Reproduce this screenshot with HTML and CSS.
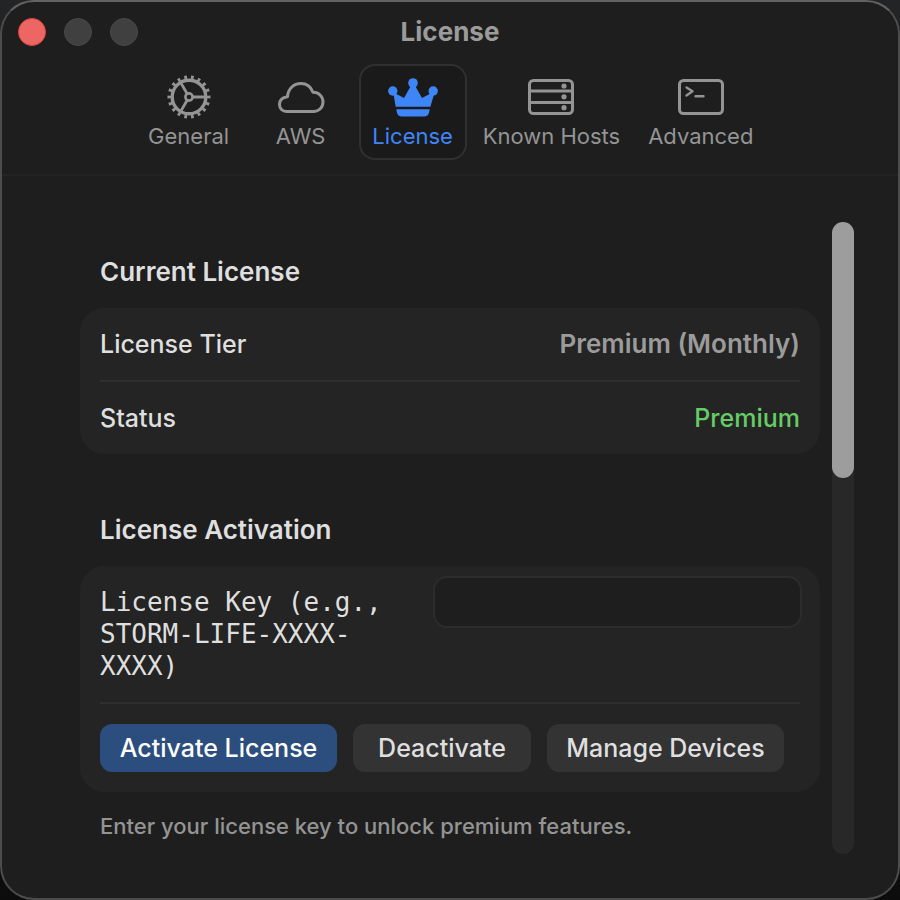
FILE: index.html
```
<!DOCTYPE html>
<html lang="en">

<head>
    <meta charset="UTF-8">
    <meta name="viewport" content="width=device-width, initial-scale=1.0">
    <title>License</title>
    <link rel="stylesheet" href="styles.css">
</head>

<body>
    <div class="window">
        <header>
            <div class="titlebar">
                <div class="lights">
                    <button type="button" class="light close" aria-label="Close"></button>
                    <button type="button" class="light" aria-label="Minimize" disabled></button>
                    <button type="button" class="light" aria-label="Zoom" disabled></button>
                </div>
                <h1>License</h1>
            </div>

            <nav>
                <a href="#general">
                    <svg width="50" height="46" viewBox="0 0 50 46" fill="none" stroke="currentColor">
                        <circle cx="25" cy="23" r="19" stroke-width="5" pathLength="180" stroke-dasharray="4 6" stroke-dashoffset="2" />
                        <circle cx="25" cy="23" r="16.8" stroke-width="3.4" />
                        <circle cx="25" cy="23" r="3.6" stroke-width="2.6" />
                        <path d="M29 23H41M23 19.5L17 9.1M23 26.5L17 36.9" stroke-width="2.8" />
                    </svg>
                    General
                </a>
                <a href="#aws">
                    <svg width="50" height="46" viewBox="0 0 50 46" fill="none" stroke="currentColor" stroke-width="3" stroke-linejoin="round">
                        <path d="M10.5 37.5H37.5C43 37.5 47 33.500 47 28C47 22.500 42.600 18 37 18.200C35 13 30.500 9.500 25 9.500C17.500 9.500 12 15 11.500 22.700C6.500 23.300 3.500 26 3.500 30.500C3.500 34.500 6.500 37.500 10.500 37.500Z" />
                    </svg>
                    AWS
                </a>
                <a href="#license" class="active" aria-current="page">
                    <svg width="50" height="46" viewBox="0 0 50 46" fill="currentColor">
                        <circle cx="25" cy="9" r="4.800" />
                        <circle cx="4.800" cy="17" r="4.700" />
                        <circle cx="45.200" cy="17" r="4.700" />
                        <path d="M3.500 19L7.500 19.500L16 24L22.800 12H27.200L34 24L42.500 19.500L46.500 19L42.300 32.800H7.700L5.500 20Z" />
                        <path d="M8.300 35.200H41.700L41.200 38Q40.200 42.500 36 42.500H14Q9.800 42.500 8.800 38Z" />
                    </svg>
                    License
                </a>
                <a href="#known-hosts">
                    <svg width="50" height="46" viewBox="0 0 50 46" fill="none" stroke="currentColor" stroke-width="3">
                        <rect x="3.500" y="6.500" width="43" height="33" rx="4" />
                        <path d="M3 17H47M3 28.500H47" />
                        <g fill="currentColor" stroke="none">
                            <circle cx="38" cy="12" r="2.600" />
                            <circle cx="38" cy="22.800" r="2.600" />
                            <circle cx="38" cy="33.700" r="2.600" />
                        </g>
                    </svg>
                    Known Hosts
                </a>
                <a href="#advanced">
                    <svg width="50" height="46" viewBox="0 0 50 46" fill="none" stroke="currentColor" stroke-width="3">
                        <rect x="3.500" y="6.500" width="43" height="33" rx="4" />
                        <path d="M10.500 13.500L16.500 17.300L10.500 21.500M19.500 22.200H27.500" stroke-width="2.400" stroke-linecap="round" stroke-linejoin="round" />
                    </svg>
                    Advanced
                </a>
            </nav>
        </header>

        <main>
            <form>
                <section>
                    <h2>Current License</h2>
                    <dl class="card">
                        <div class="row">
                            <dt>License Tier</dt>
                            <dd class="tier">Premium (Monthly)</dd>
                        </div>
                        <div class="row">
                            <dt>Status</dt>
                            <dd class="status">Premium</dd>
                        </div>
                    </dl>
                </section>

                <section>
                    <h2>License Activation</h2>
                    <div class="card">
                        <div class="key-row">
                            <label for="licenseKey">License Key (e.g., STORM-LIFE-XXXX-XXXX)</label>
                            <input type="text" id="licenseKey" name="licenseKey">
                        </div>
                        <div class="buttons">
                            <button type="button" class="primary">Activate License</button>
                            <button type="button">Deactivate</button>
                            <button type="button">Manage Devices</button>
                        </div>
                    </div>
                    <p class="hint">Enter your license key to unlock premium features.</p>
                </section>
            </form>

            <div class="scrollbar">
                <div class="thumb"></div>
            </div>
        </main>
    </div>
</body>

</html>
```

FILE: styles.css
```
* {
    box-sizing: border-box;
}

body {
    margin: 0;
    background: linear-gradient(#232426, #0c0c0d);
    color: #dfdfdf;
    font-family: Inter, "Liberation Sans", sans-serif;
    font-size: 25px;
    font-weight: 500;
    line-height: 32px;
}

.window {
    display: flex;
    flex-direction: column;
    min-height: 100vh;
    background-color: #1e1e1e;
    border: 2px solid #4c4c4c;
    border-top-color: #626262;
    border-radius: 34px;
}

header {
    border-bottom: 2px solid #242424;
    padding-bottom: 14px;
}

.titlebar {
    display: grid;
    grid-template-columns: 1fr auto 1fr;
    align-items: center;
    height: 60px;
    padding: 0 16px;
}

.lights {
    display: flex;
    gap: 18px;
}

.light {
    width: 28px;
    height: 28px;
    padding: 0;
    border: 1px solid #4a4a4a;
    border-radius: 50%;
    background-color: #404040;
}

.close {
    background-color: #ee6664;
    border-color: #e2443f;
}

h1,
h2 {
    margin: 0;
    font-size: 26px;
    font-weight: 600;
}

h1 {
    color: #9b9b9b;
    font-weight: 700;
}

nav {
    display: flex;
    justify-content: center;
    gap: 4px;
    padding-top: 2px;
}

nav a {
    display: flex;
    flex-direction: column;
    align-items: center;
    min-width: 108px;
    padding: 8px 10px 6px;
    border: 2px solid transparent;
    border-radius: 16px;
    color: #949494;
    font-size: 22px;
    font-weight: 400;
    text-decoration: none;
}

nav a.active {
    background-color: #1a1a1a;
    border-color: #303030;
    color: #3e86f8;
}

main {
    display: flex;
    flex: 1;
    gap: 12px;
    padding: 46px 44px 44px 78px;
}

form {
    flex: 1;
    display: flex;
    flex-direction: column;
    gap: 60px;
    padding-top: 34px;
}

h2 {
    margin: 0 20px 20px;
}

.card {
    margin: 0;
    padding: 0 20px;
    background-color: #242424;
    border-radius: 24px;
}

.row {
    display: flex;
    justify-content: space-between;
    padding: 20px 0;
}

.row + .row,
.buttons {
    border-top: 2px solid #2e2e2e;
}

dd {
    margin: 0;
}

.tier {
    color: #9b9b9b;
    font-size: 26px;
    font-weight: 600;
}

.status {
    color: #66cc66;
}

.key-row {
    display: grid;
    grid-template-columns: 6fr 7fr;
    gap: 16px;
    align-items: start;
    margin-right: -2px;
    padding: 10px 0;
}

.key-row label {
    padding: 10px 0;
    font-family: "DejaVu Sans Mono", "Liberation Mono", monospace;
    font-size: 26px;
    font-weight: 400;
}

.key-row input {
    width: 100%;
    height: 52px;
    padding: 0 12px;
    background-color: #1e1e1e;
    border: 2px solid #2c2c2c;
    border-radius: 14px;
    color: #dfdfdf;
    font-size: 25px;
}

.buttons {
    display: grid;
    grid-template-columns: 4fr 3fr 4fr;
    gap: 16px;
    padding: 20px 16px 20px 0;
}

.buttons button {
    height: 48px;
    padding: 0;
    background-color: #333333;
    border: none;
    border-radius: 12px;
    color: #dfdfdf;
    font-family: inherit;
    font-size: 25px;
    font-weight: 500;
}

.buttons .primary {
    background-color: #2c4e7e;
    color: #ffffff;
}

.hint {
    margin: 18px 20px 0;
    color: #949494;
    font-size: 22px;
}

.scrollbar {
    width: 22px;
    background-color: #282828;
    border-radius: 11px;
}

.thumb {
    height: 40%;
    min-height: 256px;
    background-color: #9d9d9d;
    border-radius: 11px;
}
```
